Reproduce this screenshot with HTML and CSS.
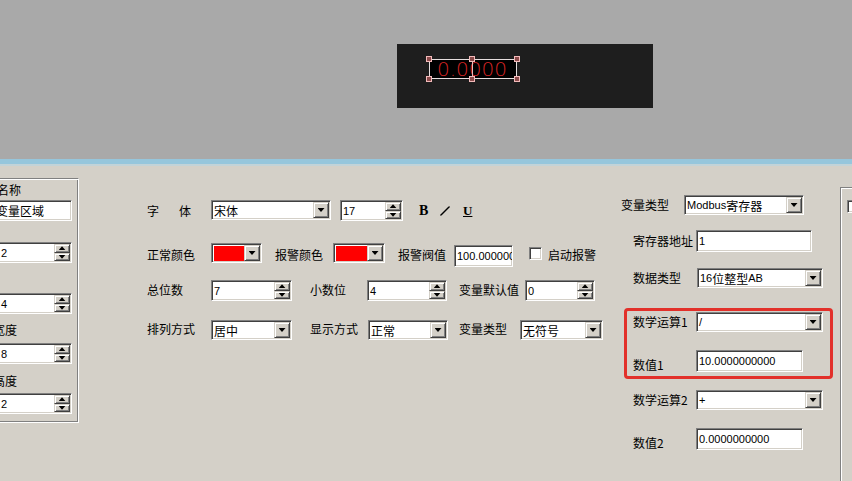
FILE: index.html
```html
<!DOCTYPE html>
<html lang="zh">
<head>
<meta charset="utf-8">
<title>变量属性</title>
<link rel="stylesheet" href="styles.css">
</head>
<body>
<div class="canvas">
  <div class="widget">
    <div class="sel">
      <span class="num">0.0000</span>
      <i class="vline"></i>
      <i class="h h-tl"></i><i class="h h-tm"></i><i class="h h-tr"></i>
      <i class="h h-bl"></i><i class="h h-bm"></i><i class="h h-br"></i>
    </div>
  </div>
</div>
<div class="sep"></div>
<div class="panel">
  <div class="lgroup">
    <div class="llab lab-name">名称</div>
    <div class="field ltext"><span class="cjk">变量区域</span></div>
    <div class="gap21"></div>
    <div class="field lspin"><span>2</span><div class="spinbtn"><b class="up"></b><b class="dn"></b></div></div>
    <div class="gap30"></div>
    <div class="field lspin"><span>4</span><div class="spinbtn"><b class="up"></b><b class="dn"></b></div></div>
    <div class="llab lab-w">宽度</div>
    <div class="field lspin"><span>8</span><div class="spinbtn"><b class="up"></b><b class="dn"></b></div></div>
    <div class="llab lab-h">高度</div>
    <div class="field lspin"><span>2</span><div class="spinbtn"><b class="up"></b><b class="dn"></b></div></div>
  </div>

  <div class="mid">
    <div class="row r1">
      <div class="lab w64 font-lab"><span>字</span><span class="ti">体</span></div>
      <div class="field combo w120"><span class="cjk">宋体</span><i class="btn"></i></div>
      <div class="field spin w63 ml9"><span>17</span><div class="spinbtn"><b class="up"></b><b class="dn"></b></div></div>
      <div class="fmt">
        <span class="fb">B</span>
        <svg class="fi" width="12" height="10" viewBox="0 0 12 10"><path d="M1 9.5 L2.5 9.5 L11 1 L11 0.5 L9.5 0.5 L1 9 Z" fill="#000"/></svg>
        <span class="fu">U</span>
      </div>
    </div>

    <div class="row r2">
      <div class="lab w64">正常颜色</div>
      <div class="field color w51"><i class="swatch"></i><i class="btn"></i></div>
      <div class="lab w58 ml13">报警颜色</div>
      <div class="field color w52"><i class="swatch"></i><i class="btn"></i></div>
      <div class="lab w56 ml13">报警阀值</div>
      <div class="field w59 thr">100.000000</div>
      <i class="chk ml16"></i>
      <div class="lab ml6">启动报警</div>
    </div>

    <div class="row r3">
      <div class="lab w64">总位数</div>
      <div class="field spin w81"><span>7</span><div class="spinbtn"><b class="up"></b><b class="dn"></b></div></div>
      <div class="lab w57 ml18">小数位</div>
      <div class="field spin w80"><span>4</span><div class="spinbtn"><b class="up"></b><b class="dn"></b></div></div>
      <div class="lab w66 ml12">变量默认值</div>
      <div class="field spin w70"><span>0</span><div class="spinbtn"><b class="up"></b><b class="dn"></b></div></div>
    </div>

    <div class="row r4">
      <div class="lab w64">排列方式</div>
      <div class="field combo w81"><span class="cjk">居中</span><i class="btn"></i></div>
      <div class="lab w58 ml18">显示方式</div>
      <div class="field combo w80"><span class="cjk">正常</span><i class="btn"></i></div>
      <div class="lab w61 ml11">变量类型</div>
      <div class="field combo w83"><span class="cjk">无符号</span><i class="btn"></i></div>
    </div>
  </div>

  <div class="right">
    <div class="rrow ra">
      <div class="lab w63">变量类型</div>
      <div class="field combo w120">Modbus<span class="cjk">寄存器</span><i class="btn"></i></div>
    </div>
    <div class="rrow rb ind">
      <div class="lab w63">寄存器地址</div>
      <div class="field w116">1</div>
    </div>
    <div class="rrow rc ind">
      <div class="lab w64">数据类型</div>
      <div class="field combo w126">16<span class="cjk">位整型</span>AB<i class="btn"></i></div>
    </div>
    <div class="redbox">
      <div class="rrow rd">
        <div class="lab w63">数学运算1</div>
        <div class="field combo w127">/<i class="btn"></i></div>
      </div>
      <div class="rrow re">
        <div class="lab w63 low">数值1</div>
        <div class="field w107">10.0000000000</div>
      </div>
    </div>
    <div class="rrow rf ind">
      <div class="lab w63">数学运算2</div>
      <div class="field combo w127">+<i class="btn"></i></div>
    </div>
    <div class="rrow rg ind">
      <div class="lab w63 low">数值2</div>
      <div class="field w107">0.0000000000</div>
    </div>
  </div>

  <div class="rgroup"><i class="chk rchk"></i></div>
</div>
</body>
</html>
```

FILE: styles.css
```css
* { box-sizing: border-box; margin: 0; padding: 0; }
html, body { width: 852px; height: 481px; overflow: hidden; }
body {
  background: #d4d0c8;
  font-family: "Noto Sans CJK SC", "Liberation Sans", sans-serif;
  font-size: 12px;
  color: #000;
}
i { display: block; font-style: normal; }

/* ---------- editor canvas ---------- */
.canvas { height: 159px; background: #a9a9a9; padding: 44px 0 0 397px; }
.widget { width: 256px; height: 64px; background: #1e1e1e; padding: 15px 0 0 32px; }
.sel {
  position: relative;
  width: 88px; height: 20px;
  background: #000;
  border: 1px solid #e6dede;
  display: flex; align-items: center;
  padding-left: 7px;
}
.num {
  font-family: "DejaVu Sans", sans-serif;
  font-weight: 200;
  font-size: 20px;
  line-height: 18px;
  color: #d42424;
}
.vline { position: absolute; left: 42px; top: 0; bottom: 0; width: 1px; background: #e8b8b8; }
.h { position: absolute; width: 6px; height: 6px; border: 1px solid #f2baba; background: #8a4a4a; }
.h-tl { left: -4px; top: -4px; }
.h-tm { left: 39px; top: -4px; }
.h-tr { right: -4px; top: -4px; }
.h-bl { left: -4px; bottom: -4px; }
.h-bm { left: 39px; bottom: -4px; }
.h-br { right: -4px; bottom: -4px; }

.sep { height: 7px; border-top: 5px solid #96c6dc; background: #c2d3d8; }

/* ---------- panel ---------- */
.panel { display: flex; height: 315px; }

.lgroup {
  width: 79px; height: 245px;
  margin-top: 12px;
  padding-top: 2px;
  border-top: 1px solid #808080;
  border-right: 1px solid #fff;
  border-bottom: 1px solid #fff;
  box-shadow: inset 0 1px 0 #fff, inset -1px -1px 0 #808080;
  display: flex; flex-direction: column;
  flex: none;
}
.llab { height: 18px; line-height: 18px; white-space: nowrap; }
.lab-name { margin: 0 0 1px -3px; }
.lab-w { margin: 7px 0 4px -7px; }
.lab-h { margin: 8px 0 3px -7px; }
.gap21 { height: 21px; flex: none; }
.gap30 { height: 30px; flex: none; }
.ltext { height: 21px; width: 79px; margin-left: -7px; flex: none; }
.lspin { height: 21px; width: 74px; margin-left: -2px; flex: none; padding-left: 3px; }

/* ---------- generic win32 widgets ---------- */
.field {
  display: flex; align-items: center;
  background: #fff;
  border: 1px solid;
  border-color: #808080 #fff #fff #808080;
  box-shadow: inset 1px 1px 0 #404040, inset -1px -1px 0 #d4d0c8;
  padding-left: 2px;
  font-family: "Liberation Sans", "Noto Sans CJK SC", sans-serif;
  font-size: 11px;
  white-space: nowrap;
  overflow: hidden;
  flex: none;
}
.cjk { font-family: "Noto Sans CJK SC", sans-serif; font-size: 12px; }
.btn, .spinbtn b {
  background: #d4d0c8;
  border: 1px solid;
  border-color: #d4d0c8 #404040 #404040 #d4d0c8;
  box-shadow: inset 1px 1px 0 #fff, inset -1px -1px 0 #808080;
  display: flex; align-items: center; justify-content: center;
}
.btn { width: 16px; align-self: stretch; margin: 1px 1px 1px auto; flex: none; }
.btn::after {
  content: ""; width: 7px; height: 4px; background: #000;
  clip-path: polygon(0 0, 100% 0, 50% 100%);
}
.spinbtn { width: 16px; align-self: stretch; margin: 1px 1px 1px auto; display: flex; flex-direction: column; flex: none; }
.spinbtn b { flex: 1; }
.spinbtn b::after { content: ""; width: 7px; height: 4px; background: #000; }
.spinbtn b.up::after { clip-path: polygon(50% 0, 100% 100%, 0 100%); }
.spinbtn b.dn::after { clip-path: polygon(0 0, 100% 0, 50% 100%); }
.color { padding-left: 0; }
.swatch { flex: 1; align-self: stretch; margin: 2px 0 1px 2px; background: #ff0000; }
.chk {
  width: 13px; height: 13px; flex: none;
  background: #fff;
  border: 1px solid; border-color: #808080 #fff #fff #808080;
  box-shadow: inset 1px 1px 0 #404040, inset -1px -1px 0 #d4d0c8;
}

/* ---------- middle block ---------- */
.mid { width: 474px; margin-left: 68px; padding-top: 34px; flex: none; display: flex; flex-direction: column; }
.row { display: flex; align-items: center; }
.lab { line-height: 16px; white-space: nowrap; flex: none; }
.r1 { height: 21px; }
.r1 .field { height: 21px; }
.r1 .combo { height: 20px; align-self: flex-start; }
.font-lab { display: flex; }
.ti { margin-left: 20px; }
.fmt { display: flex; align-items: center; margin-left: 16px; }
.fb { font-family: "Liberation Serif", serif; font-weight: bold; font-size: 14px; width: 20px; }
.fu { font-family: "Liberation Serif", serif; font-weight: bold; font-size: 13px; text-decoration: underline; margin-left: 12px; }

.r2 { height: 24px; margin-top: 22px; align-items: flex-start; }
.r2 .lab { line-height: 24px; }
.r2 .color { height: 20px; }
.thr { height: 22px; margin-top: 2px; }
.r2 .chk { margin-top: 4px; }
.r3 { height: 21px; margin-top: 13px; }
.r3 .field { height: 21px; }
.r3 .lab { margin-top: -2px; }
.r4 { height: 20px; margin-top: 19px; }
.r4 .field { height: 20px; }
.r4 .lab { margin-top: -3px; }

/* ---------- right block ---------- */
.right { width: 219px; padding-top: 29px; flex: none; display: flex; flex-direction: column; }
.rrow { display: flex; align-items: center; }
.ind { padding-left: 12px; }
.ra { height: 20px; }
.ra .field { height: 20px; }
.rb { height: 22px; margin-top: 15px; }
.rb .field { height: 22px; }
.rc { height: 20px; margin-top: 16px; }
.rc .field { height: 20px; }
.redbox {
  width: 209px; margin: 20px 0 0 3px;
  border: 3px solid #e2302a; border-radius: 4px;
  padding: 1px 0 4px 6px;
}
.rd { height: 20px; }
.rd .field { height: 20px; }
.re { height: 22px; margin-top: 18px; }
.re .field { height: 22px; }
.rf { height: 20px; margin-top: 11px; }
.rf .field { height: 20px; }
.rg { height: 22px; margin-top: 18px; }
.rg .field { height: 22px; }
.low { padding-top: 8px; }

.rgroup {
  flex: 1; margin-top: 21px;
  border-top: 1px solid #808080;
  border-left: 1px solid #808080;
  box-shadow: inset 1px 1px 0 #fff;
  padding: 12px 0 0 6px;
}
.rchk { width: 13px; height: 13px; }

/* widths & margins */
.w51 { width: 51px; } .w52 { width: 52px; } .w56 { width: 56px; } .w57 { width: 57px; }
.w58 { width: 58px; } .w59 { width: 59px; } .w61 { width: 61px; } .w63 { width: 63px; }
.w64 { width: 64px; } .w66 { width: 66px; } .w70 { width: 70px; } .w80 { width: 80px; }
.w81 { width: 81px; } .w83 { width: 83px; } .w107 { width: 107px; } .w116 { width: 116px; }
.w120 { width: 120px; } .w126 { width: 126px; } .w127 { width: 127px; }
.ml6 { margin-left: 6px; } .ml9 { margin-left: 9px; } .ml11 { margin-left: 11px; }
.ml12 { margin-left: 12px; } .ml13 { margin-left: 13px; } .ml16 { margin-left: 16px; }
.ml18 { margin-left: 18px; }
```
